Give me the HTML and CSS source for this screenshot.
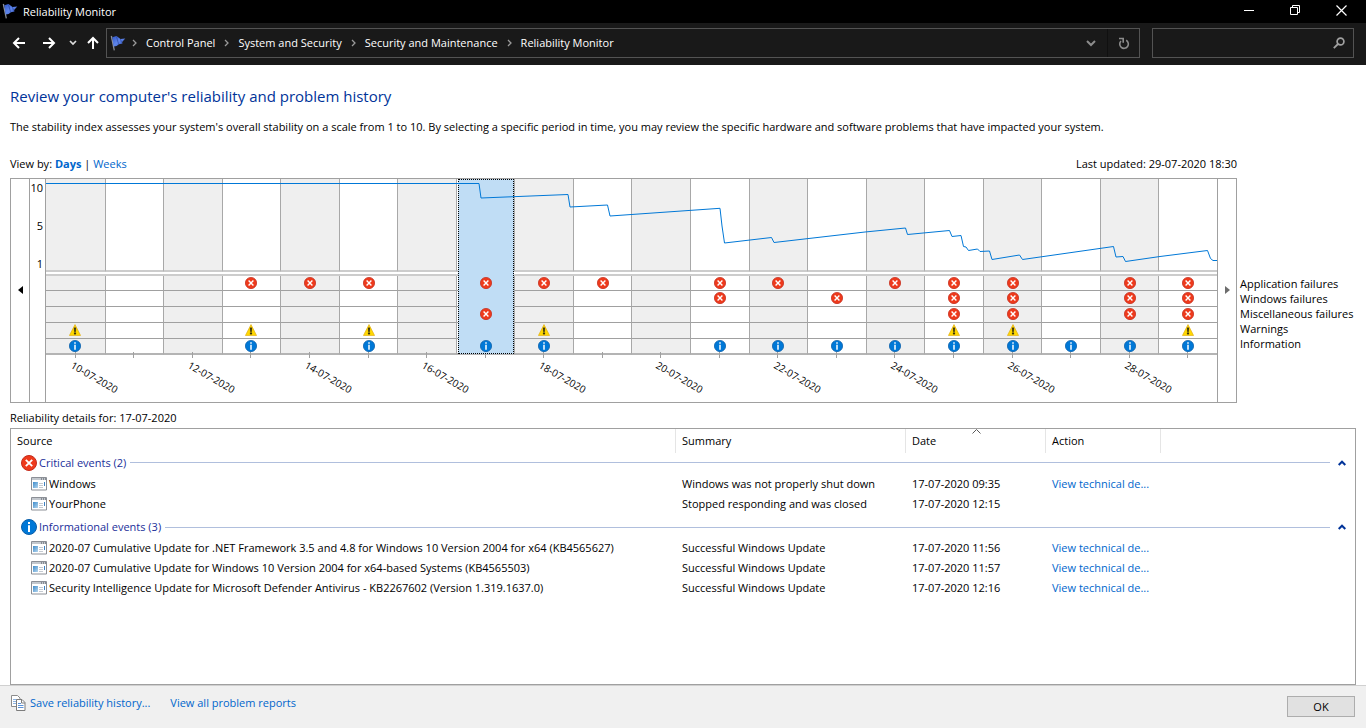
FILE: index.html
```html
<!DOCTYPE html>
<html lang="en">
<head>
<meta charset="utf-8">
<title>Reliability Monitor</title>
<link rel="stylesheet" href="styles.css">
</head>
<body>
<svg class="sprite" aria-hidden="true">
  <defs>
    <linearGradient id="flag-blue" x1="0" y1="0" x2="1" y2="1">
      <stop offset="0" stop-color="#2f55c8"/><stop offset=".5" stop-color="#5f86ea"/><stop offset="1" stop-color="#2a49b4"/>
    </linearGradient>
    <linearGradient id="pane-blue" x1="0" y1="0" x2="1" y2="1">
      <stop offset="0" stop-color="#3f8ccb"/><stop offset="1" stop-color="#b5d6ee"/>
    </linearGradient>
  </defs>
  <symbol id="flag" viewBox="0 0 16 16">
    <path d="M.7 1.2 2 .8 4.900 15.200 3.700 15.600Z" fill="#8d9299"/>
    <path d="M2.300 2.200 6.500 1l2 1.400L10.500 4l4.800-.4-3.200 3.300.4 1.700-3.600.6-2.200 1.700-3.200.6Z" fill="url(#flag-blue)"/>
    <path d="M6.500 1.500 8.500 8.800M10.500 4l1 3.500" stroke="#203a94" stroke-width=".6" fill="none"/>
  </symbol>
  <symbol id="error" viewBox="0 0 16 16">
    <circle cx="8" cy="8" r="7.500" fill="#ee3a1c" stroke="#c42b1c" stroke-width="1"/>
    <path d="m4.800 4.800 6.400 6.400m0-6.400-6.400 6.400" stroke="#fff" stroke-width="1.900"/>
  </symbol>
  <symbol id="info" viewBox="0 0 16 16">
    <circle cx="8" cy="8" r="7.500" fill="#0078d7" stroke="#0a5ea8" stroke-width="1"/>
    <path d="M7 3h2v2H7zM7 6.200h2V13H7z" fill="#fff"/>
  </symbol>
  <symbol id="warning" viewBox="0 0 16 16">
    <path d="M8 .8 15.400 15.300H.6Z" fill="#ffd800" stroke="#e3b11c" stroke-width="1" stroke-linejoin="round"/>
    <path d="M7 5h2l-.3 5.400H7.300zM7 11.500h2v2H7z" fill="#111" stroke="#111" stroke-width=".4"/>
  </symbol>
  <symbol id="program" viewBox="0 0 16 14">
    <path d="M.5.500h15v12.500H.5z" fill="#fff" stroke="#8b8f96"/>
    <path d="M1 1h14v2H1z" fill="#c3c8ce"/>
    <path d="M10 1.500h1v1h-1zM12 1.500h1v1h-1zM14 1.500h1v1h-1z" fill="#4a4f57"/>
    <path d="M2 5h5v6H2z" fill="url(#pane-blue)"/>
    <path d="M8 6.500h4M8 8.500h4M8 10.500h4" stroke="#c5cad1"/>
    <path d="M13.500 5v4" stroke="#3d82c4"/>
  </symbol>
  <symbol id="collapse" viewBox="0 0 8 6">
    <path d="m.7 5 3.300-3.300L7.300 5" fill="none" stroke="#003399" stroke-width="2"/>
  </symbol>
  <symbol id="crumb" viewBox="0 0 5 8">
    <path d="m1 1 3 3-3 3" fill="none" stroke="#9a9a9a" stroke-width="1.300"/>
  </symbol>
</svg>

<header class="titlebar">
  <svg class="icon16"><use href="#flag"/></svg>
  <h1 class="window-title">Reliability Monitor</h1>
  <button class="window-button" aria-label="Minimize"><svg width="11" height="11"><path d="M0 5.500h10" stroke="#fff"/></svg></button>
  <button class="window-button" aria-label="Restore"><svg width="11" height="11"><path d="M.5 2.500h7v7h-7zM2.500 2.500v-2h7v7h-2" fill="none" stroke="#fff"/></svg></button>
  <button class="window-button" aria-label="Close"><svg width="11" height="11"><path d="m.5.5 10 10m0-10-10 10" stroke="#fff" stroke-width="1.200"/></svg></button>
</header>

<nav class="navbar">
  <div class="nav-arrows">
    <button class="nav-button" aria-label="Back"><svg width="14" height="12"><path d="M13 6H2m5-5L2 6l5 5" fill="none" stroke="#fff" stroke-width="2"/></svg></button>
    <button class="nav-button" aria-label="Forward"><svg width="14" height="12"><path d="M1 6h11M7 1l5 5-5 5" fill="none" stroke="#fff" stroke-width="2"/></svg></button>
    <button class="nav-button nav-recent" aria-label="Recent locations"><svg width="8" height="6"><path d="m1 1 3 3 3-3" fill="none" stroke="#ddd" stroke-width="1.700"/></svg></button>
    <button class="nav-button nav-up" aria-label="Up"><svg width="12" height="14"><path d="M6 13V2M1 7l5-5 5 5" fill="none" stroke="#fff" stroke-width="2"/></svg></button>
  </div>
  <div class="address">
    <svg class="icon16"><use href="#flag"/></svg>
    <div class="crumbs">
      <svg class="crumb-mark"><use href="#crumb"/></svg><a href="#">Control Panel</a>
      <svg class="crumb-mark"><use href="#crumb"/></svg><a href="#">System and Security</a>
      <svg class="crumb-mark"><use href="#crumb"/></svg><a href="#">Security and Maintenance</a>
      <svg class="crumb-mark"><use href="#crumb"/></svg><a href="#">Reliability Monitor</a>
    </div>
    <button class="address-button" aria-label="Previous locations"><svg width="10" height="7"><path d="m1 1 4 4 4-4" fill="none" stroke="#8c8c8c" stroke-width="2"/></svg></button>
    <button class="address-button address-refresh" aria-label="Refresh"><svg width="12" height="13"><path d="M8.200 3.300A4.300 4.300 0 1 1 3 4M1 1.500h4.200v4.200" fill="none" stroke="#8c8c8c" stroke-width="1.600"/></svg></button>
  </div>
  <div class="search">
    <input class="search-input" type="search" aria-label="Search">
    <svg width="12" height="12"><circle cx="7.500" cy="4.500" r="3.400" fill="none" stroke="#a0a0a0" stroke-width="1.700"/><path d="M5 7 .8 11.200" stroke="#a0a0a0" stroke-width="1.800"/></svg>
  </div>
</nav>

<main class="content">
  <h2 class="heading">Review your computer's reliability and problem history</h2>
  <p class="intro">The stability index assesses your system's overall stability on a scale from 1 to 10. By selecting a specific period in time, you may review the specific hardware and software problems that have impacted your system.</p>

  <section class="report">
    <div class="report-bar">
      <span>View by: <a class="view-current" href="#">Days</a> | <a href="#">Weeks</a></span>
      <span>Last updated: 29-07-2020 18:30</span>
    </div>
    <div class="chart">
      <button class="scroll-button" aria-label="Earlier"><svg width="5" height="8"><path d="M5 0v8L0 4z" fill="#000"/></svg></button>
      <div class="scale"><span>10</span><span>5</span><span>1</span></div>
      <div class="plot">
        <div class="days" id="days"></div>
        <svg class="stability" viewBox="46 179 1171 92" preserveAspectRatio="none" role="img" aria-label="Stability index">
          <polyline points="46,183.500 479,183.500 481,198 568,194.500 570,207 607.500,205 610,216 720,208.300 722,226 724.500,243 771.500,237.500 774,242.500 865,232 905.500,228 907.500,234.500 949.500,230.500 952,236.500 961,235.500 963.500,246.500 966,247 968.500,250.500 977.500,249 980,251.500 989.500,251 992,259.500 1019.500,255 1022.500,259.500 1113.500,246.500 1116,257 1123,256.500 1125.500,261.500 1160,256.500 1207.500,250.500 1210.500,258.500 1213,260.500 1217,260.500"/>
        </svg>
      </div>
      <button class="scroll-button" aria-label="Later"><svg width="5" height="8"><path d="M0 0v8l5-4z" fill="#6d6d6d"/></svg></button>
    </div>
    <ul class="legend">
      <li>Application failures</li>
      <li>Windows failures</li>
      <li>Miscellaneous failures</li>
      <li>Warnings</li>
      <li>Information</li>
    </ul>
  </section>

  <h3 class="details-title">Reliability details for: 17-07-2020</h3>
  <div class="details">
    <table class="events">
      <colgroup><col class="col-source"><col class="col-summary"><col class="col-date"><col class="col-action"><col></colgroup>
      <thead>
        <tr><th>Source</th><th>Summary</th><th>Date<svg class="sort-mark" width="9" height="5"><path d="m.5 4.500 4-4 4 4" fill="none" stroke="#5a5a5a"/></svg></th><th>Action</th><td></td></tr>
      </thead>
      <tbody>
        <tr class="group"><th colspan="5"><div class="group-line"><svg class="icon16"><use href="#error"/></svg><span>Critical events (2)</span><button class="collapse" aria-label="Collapse critical events"><svg width="8" height="6"><use href="#collapse"/></svg></button></div></th></tr>
        <tr><td class="source"><svg class="program"><use href="#program"/></svg>Windows</td><td>Windows was not properly shut down</td><td>17-07-2020 09:35</td><td><a href="#">View technical de...</a></td><td></td></tr>
        <tr><td class="source"><svg class="program"><use href="#program"/></svg>YourPhone</td><td>Stopped responding and was closed</td><td>17-07-2020 12:15</td><td></td><td></td></tr>
      </tbody>
      <tbody>
        <tr class="group group-next"><th colspan="5"><div class="group-line"><svg class="icon16"><use href="#info"/></svg><span>Informational events (3)</span><button class="collapse" aria-label="Collapse informational events"><svg width="8" height="6"><use href="#collapse"/></svg></button></div></th></tr>
        <tr><td class="source"><svg class="program"><use href="#program"/></svg>2020-07 Cumulative Update for .NET Framework 3.5 and 4.8 for Windows 10 Version 2004 for x64 (KB4565627)</td><td>Successful Windows Update</td><td>17-07-2020 11:56</td><td><a href="#">View technical de...</a></td><td></td></tr>
        <tr><td class="source"><svg class="program"><use href="#program"/></svg>2020-07 Cumulative Update for Windows 10 Version 2004 for x64-based Systems (KB4565503)</td><td>Successful Windows Update</td><td>17-07-2020 11:57</td><td><a href="#">View technical de...</a></td><td></td></tr>
        <tr><td class="source"><svg class="program"><use href="#program"/></svg>Security Intelligence Update for Microsoft Defender Antivirus - KB2267602 (Version 1.319.1637.0)</td><td>Successful Windows Update</td><td>17-07-2020 12:16</td><td><a href="#">View technical de...</a></td><td></td></tr>
      </tbody>
    </table>
  </div>
</main>

<footer class="footer">
  <a class="save" href="#"><svg width="15" height="16"><path d="M.5.500h6l2.500 2.500v8.500H.5z" fill="#fff" stroke="#8c8c8c"/><path d="M2 4.500h5M2 6.500h3M2 8.500h3" stroke="#8db4e2"/><path d="M5.500 4.500h5.500l3 3v8H5.500z" fill="#fff" stroke="#7d7d7d"/><path d="M10.500 4.500V8H14" fill="none" stroke="#7d7d7d"/><path d="M7 8.500h3M7 10.500h5.500M7 12.500h5.500" stroke="#5b92d8"/></svg>Save reliability history...</a>
  <a href="#">View all problem reports</a>
  <button class="ok">OK</button>
</footer>
<script src="script.js"></script>
</body>
</html>
```

FILE: styles.css
```css
* { box-sizing: border-box; }

body {
  margin: 0;
  min-height: 100vh;
  display: flex;
  flex-direction: column;
  background: #fff;
  color: #000;
  font: 11px/16px "Open Sans", "Noto Sans", sans-serif;
}

button { padding: 0; border: 0; background: none; color: inherit; font: inherit; }
a { color: #0066cc; text-decoration: none; }
svg { display: block; flex: none; }
h1, h2, h3, p, ul { margin: 0; padding: 0; font: inherit; }
.sprite { position: absolute; width: 0; height: 0; }
.icon16 { width: 16px; height: 16px; }

.titlebar { display: flex; align-items: center; height: 23px; padding: 0 2px 2px; background: #000; color: #fff; }
.window-title { flex: 1; padding: 2px 0 0 5px; }
.window-button { width: 46px; height: 21px; display: flex; align-items: center; justify-content: center; }

.navbar { display: flex; gap: 12px; height: 42px; padding: 5px 12px 7px 0; background: #191919; color: #fff; }
.nav-arrows { display: flex; align-items: center; gap: 10px; padding-left: 9px; margin-right: -5px; }
.nav-button { display: flex; align-items: center; justify-content: center; width: 20px; height: 20px; }
.nav-recent { width: 8px; }
.nav-up { width: 12px; }
.address { flex: 1; display: flex; align-items: center; border: 1px solid #535353; padding-left: 3px; }
.crumbs { flex: 1; display: flex; align-items: center; gap: 9px; padding-left: 6px; white-space: nowrap; }
.crumbs a { color: #fff; }
.crumb-mark { width: 5px; height: 8px; }
.address-button { display: flex; align-items: center; justify-content: center; width: 32px; height: 28px; }
.address-refresh { border-left: 1px solid #101010; }
.search { width: 202px; display: flex; align-items: center; padding-right: 8px; border: 1px solid #535353; }
.search-input { flex: 1; min-width: 0; border: 0; background: none; color: #fff; font: inherit; outline: 0; }

.content { flex: 1; display: flex; flex-direction: column; padding: 20px 10px 0; }
.heading { color: #003399; font-size: 15px; line-height: 22px; }
.intro { margin-top: 12px; }

.report { display: grid; grid-template-columns: minmax(0, 1fr) 119px; margin-top: 21px; }
.report-bar { grid-column: 1; display: flex; justify-content: space-between; padding-bottom: 6px; }
.view-current { font-weight: 700; }
.chart { grid-column: 1; display: flex; height: 225px; border: 1px solid #a0a0a0; }
.scroll-button { width: 18px; display: flex; align-items: center; justify-content: center; padding-bottom: 2px; }
.scale { width: 17px; display: flex; flex-direction: column; justify-content: space-between; text-align: right; padding: 1px 2px 130px 0; border: solid #a0a0a0; border-width: 0 1px; }
.plot { position: relative; flex: 1; min-width: 0; border-right: 1px solid #a0a0a0; }
.days { display: grid; grid-template-columns: repeat(20, minmax(0, 1fr)); }
.stability { position: absolute; left: 0; top: 0; width: 100%; height: 92px; pointer-events: none; }
.stability polyline { fill: none; stroke: #0078d7; stroke-width: 1; vector-effect: non-scaling-stroke; }

.day { position: relative; display: block; }
.day-index { display: block; height: 93px; border-bottom: 2px solid #cccccc; }
.day-events { display: block; margin-top: 2px; border-top: 2px solid #cccccc; }
.day-cell { display: flex; align-items: center; justify-content: center; height: 16px; padding-bottom: 1px; border-bottom: 1px solid #a0a0a0; }
.day-cell:first-child { height: 15px; }
.day-cell:last-child { padding-bottom: 0; border-bottom: 2px solid #b4b4b4; }
.day-index, .day-cell { border-left: 1px solid #a8a8a8; }
.day:first-child .day-index, .day:first-child .day-cell { border-left: 0; }
.day:nth-child(odd) .day-index, .day:nth-child(odd) .day-cell { background: #efefef; }
.day-cell svg { position: relative; z-index: 1; width: 12px; height: 12px; }
.day-tick { display: block; width: 1px; height: 6px; margin: -3px auto 0; background: #a0a0a0; }
.day-date { position: absolute; left: 26px; top: 178px; transform: rotate(30deg); transform-origin: 0 50%; font-size: 10px; line-height: 14px; white-space: nowrap; }
.day-selected::before { content: ""; position: absolute; left: 2px; right: 0; top: 0; height: 173px; border: 1px dotted #000; background: #c0ddf5; }

.legend { grid-column: 2; align-self: start; margin: 98px 0 0 3px; list-style: none; line-height: 15px; white-space: nowrap; }

.details-title { margin-top: 7px; }
.details { flex: 1; margin-top: 2px; border: 1px solid #a0a0a0; }
.events { width: 100%; border-collapse: separate; border-spacing: 0; table-layout: fixed; }
.col-source { width: 665px; }
.col-summary { width: 230px; }
.col-date { width: 140px; }
.col-action { width: 115px; }
.events th { text-align: left; font-weight: 400; }
.events td, .events th { height: 20px; padding: 0 6px; white-space: nowrap; }
.events thead th { position: relative; height: 24px; border-right: 1px solid #e5e5e5; }
.sort-mark { position: absolute; left: 50%; top: 0; margin-left: -4px; }
.events .source { display: flex; align-items: center; gap: 2px; padding: 0 0 0 20px; }
.program { width: 16px; height: 14px; }
.events .group th { height: 21px; padding: 0 9px 2px 10px; }
.events .group-next th { height: 24px; padding: 2px 9px 0 10px; }
.group-line { display: flex; align-items: center; gap: 2px; color: #1a2f9a; }
.group-line::after { content: ""; flex: 1; order: 1; height: 1px; margin: 0 6px 0 2px; background: #b0bfdd; }
.collapse { order: 2; display: flex; }

.footer { display: flex; align-items: flex-start; gap: 20px; height: 43px; padding: 9px 11px 0; border-top: 1px solid #d0d0d0; background: #f0f0f0; }
.save { display: flex; gap: 4px; }
.ok { width: 68px; height: 21px; margin: 1px 0 0 auto; border: 1px solid #adadad; background: #e1e1e1; }
```

FILE: script.js
```js
// Rows of each day: application, windows and miscellaneous failures, warnings, information.
const KINDS = ["error", "error", "error", "warning", "info"];
const DAYS = [
  "00011", "00000", "00000", "10011", "10000", "10011", "00000", "10101", "10011", "10000",
  "00000", "11001", "10001", "01001", "10001", "11111", "11111", "00001", "11101", "11111"
];
const FIRST_DAY = 10;
const SELECTED_DAY = 17;

document.getElementById("days").innerHTML = DAYS.map((flags, i) => {
  const date = `${FIRST_DAY + i}-07-2020`;
  const selected = FIRST_DAY + i === SELECTED_DAY;
  const cells = KINDS.map((kind, row) =>
    `<span class="day-cell">${flags[row] === "1" ? `<svg><use href="#${kind}"/></svg>` : ""}</span>`
  ).join("");
  const label = i % 2 === 0 ? `<span class="day-date">${date}</span>` : "";
  return `<button class="day${selected ? " day-selected" : ""}" aria-label="${date}">
    <span class="day-index"></span><span class="day-events">${cells}</span>
    <span class="day-tick"></span>${label}</button>`;
}).join("");
```
